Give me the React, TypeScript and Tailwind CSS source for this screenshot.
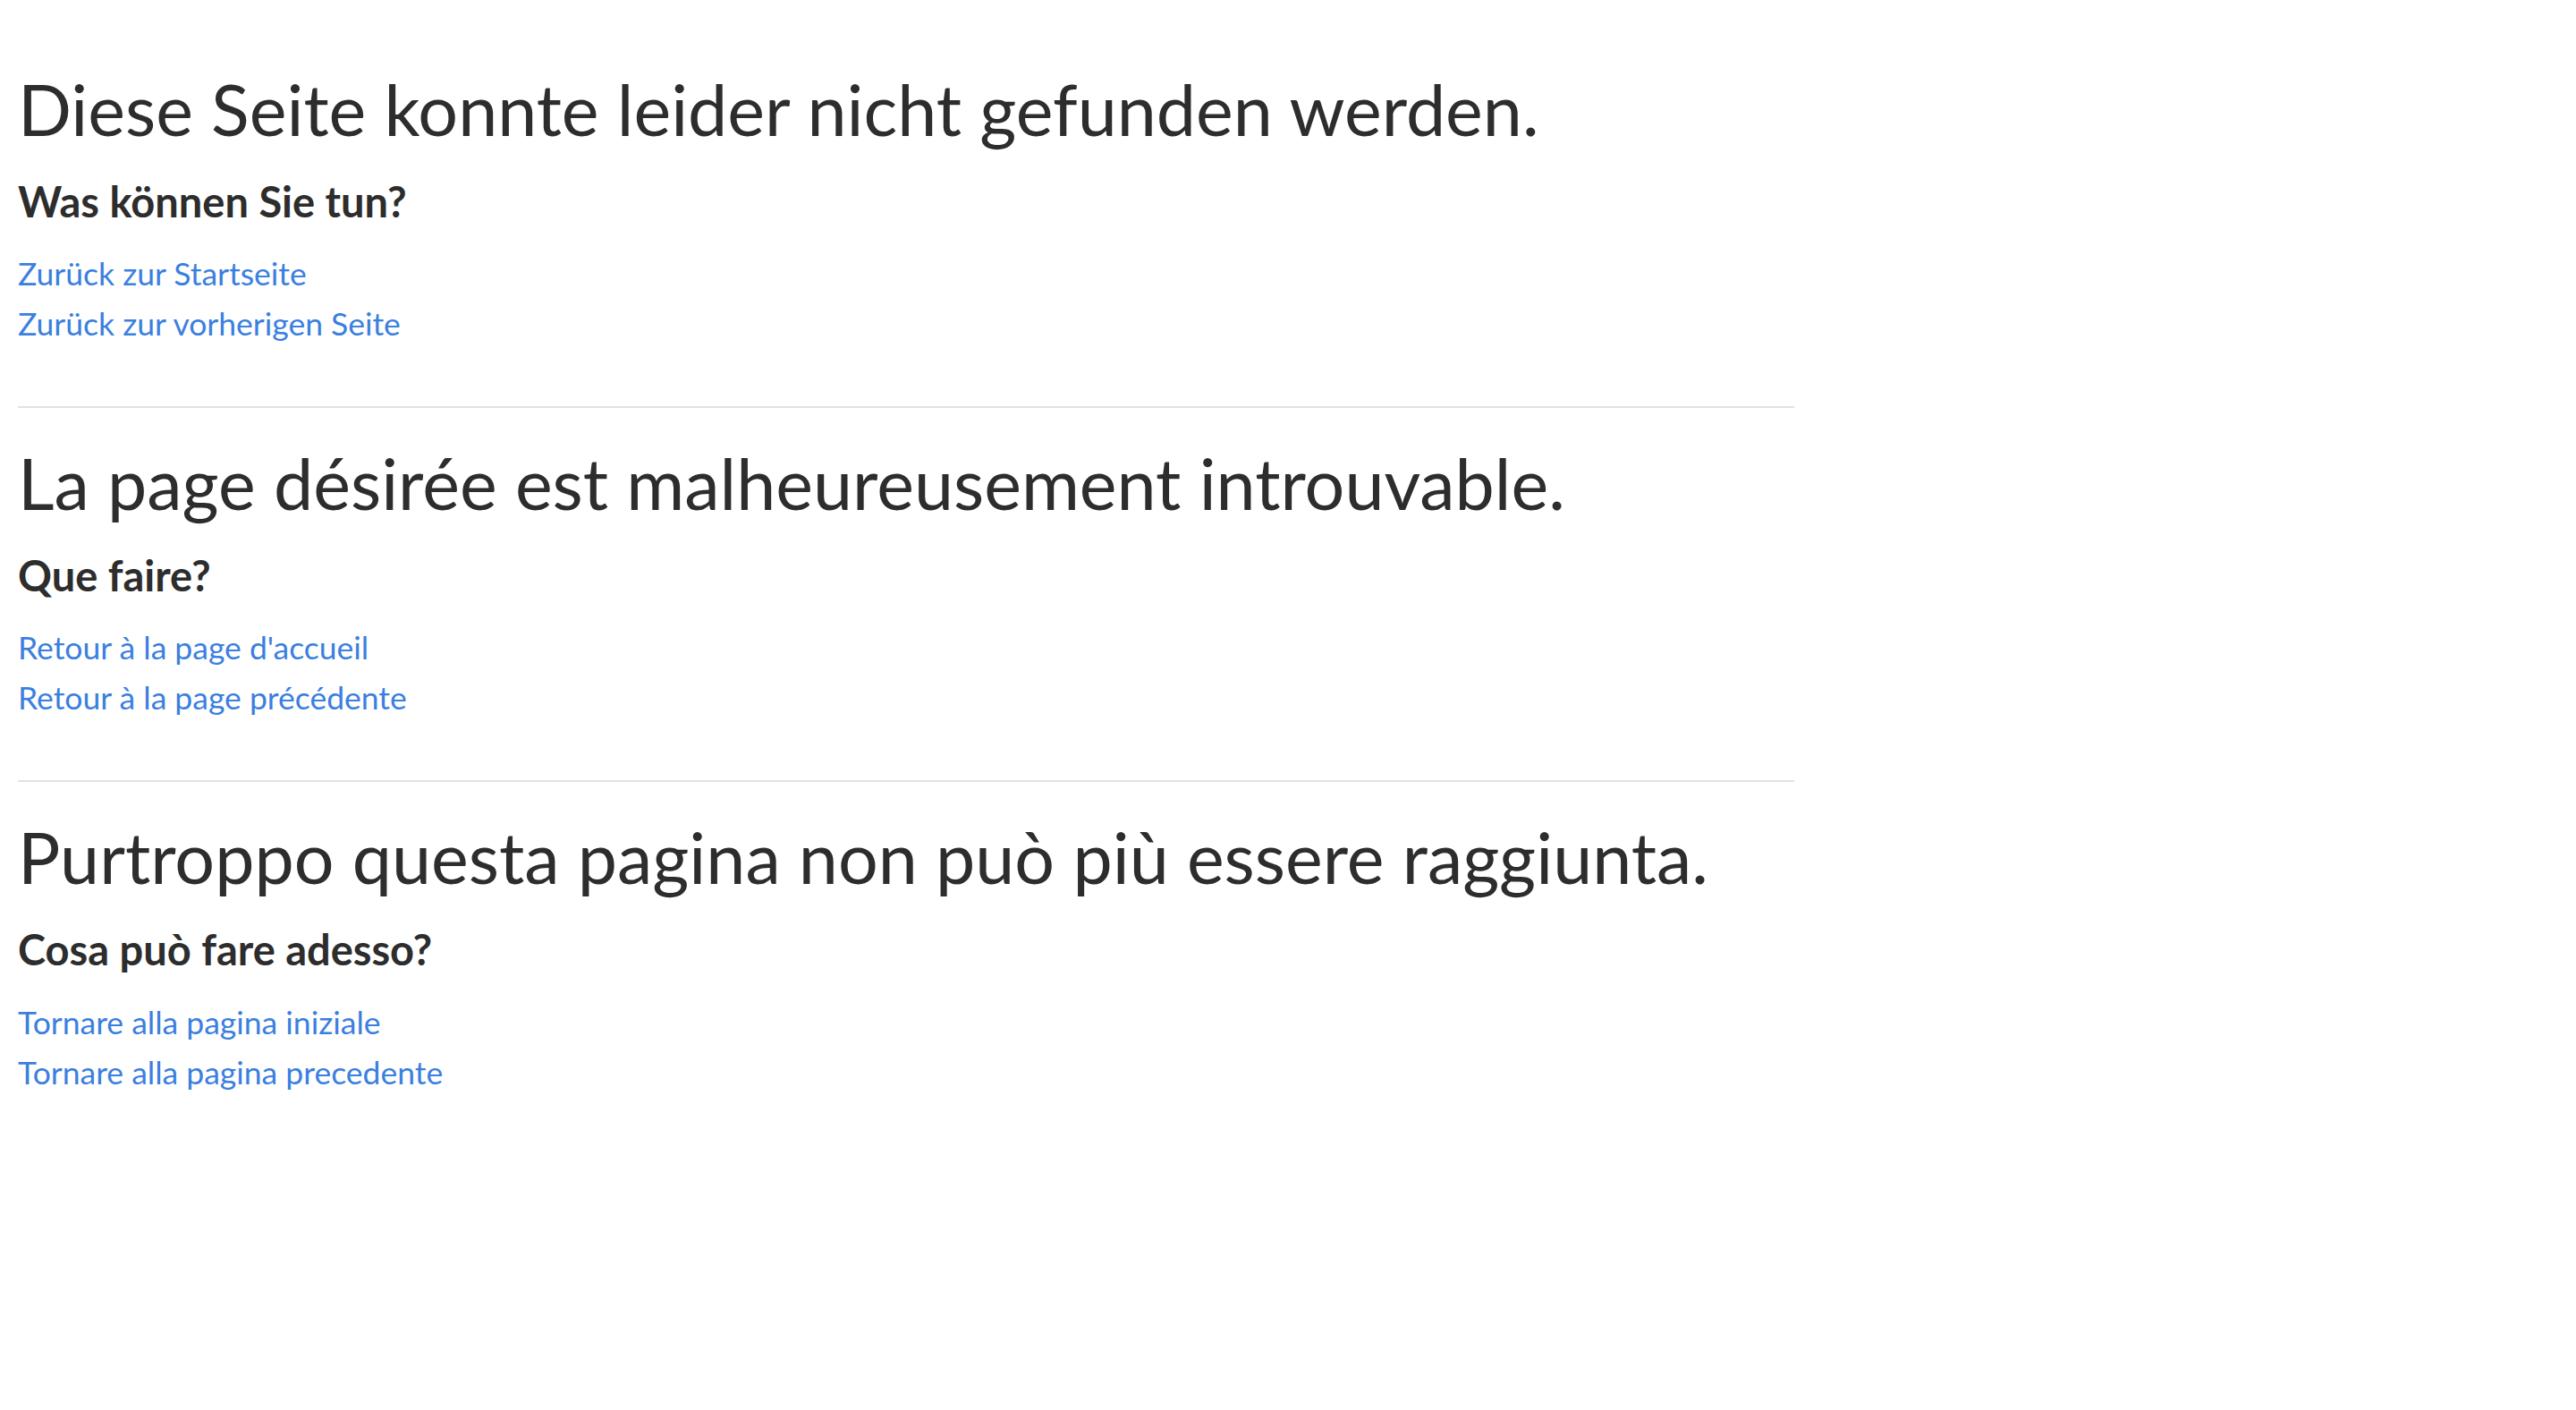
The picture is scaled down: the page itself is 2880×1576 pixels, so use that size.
const sections = [
  {
    title: "Diese Seite konnte leider nicht gefunden werden.",
    question: "Was können Sie tun?",
    home: "Zurück zur Startseite",
    back: "Zurück zur vorherigen Seite",
  },
  {
    title: "La page désirée est malheureusement introuvable.",
    question: "Que faire?",
    home: "Retour à la page d'accueil",
    back: "Retour à la page précédente",
  },
  {
    title: "Purtroppo questa pagina non può più essere raggiunta.",
    question: "Cosa può fare adesso?",
    home: "Tornare alla pagina iniziale",
    back: "Tornare alla pagina precedente",
  },
];

export default function App() {
  return (
    <div className="min-h-screen bg-white font-['Lato',sans-serif] text-[#2d2d2d]">
      <div className="w-[2026px] px-5 pt-[37px]">
        {sections.map((s, i) => (
          <section
            key={s.title}
            className={
              i === 0
                ? "pt-[38px] pb-[64px]"
                : "border-t-2 border-[#e2e2e2] pt-[37px] pb-[64px]"
            }
          >
            <h1 className="text-[79px] font-normal leading-[1.2]">{s.title}</h1>
            <h2 className="mt-[27px] text-[47px] font-bold leading-[1.2]">{s.question}</h2>
            <ul className="mt-[25px] flex flex-col">
              <li className="text-[35.5px] leading-[56px]">
                <a href="#" className="text-[#3b7fdf] no-underline hover:underline">
                  {s.home}
                </a>
              </li>
              <li className="text-[35.5px] leading-[56px]">
                <a href="#" className="text-[#3b7fdf] no-underline hover:underline">
                  {s.back}
                </a>
              </li>
            </ul>
          </section>
        ))}
      </div>
    </div>
  );
}
